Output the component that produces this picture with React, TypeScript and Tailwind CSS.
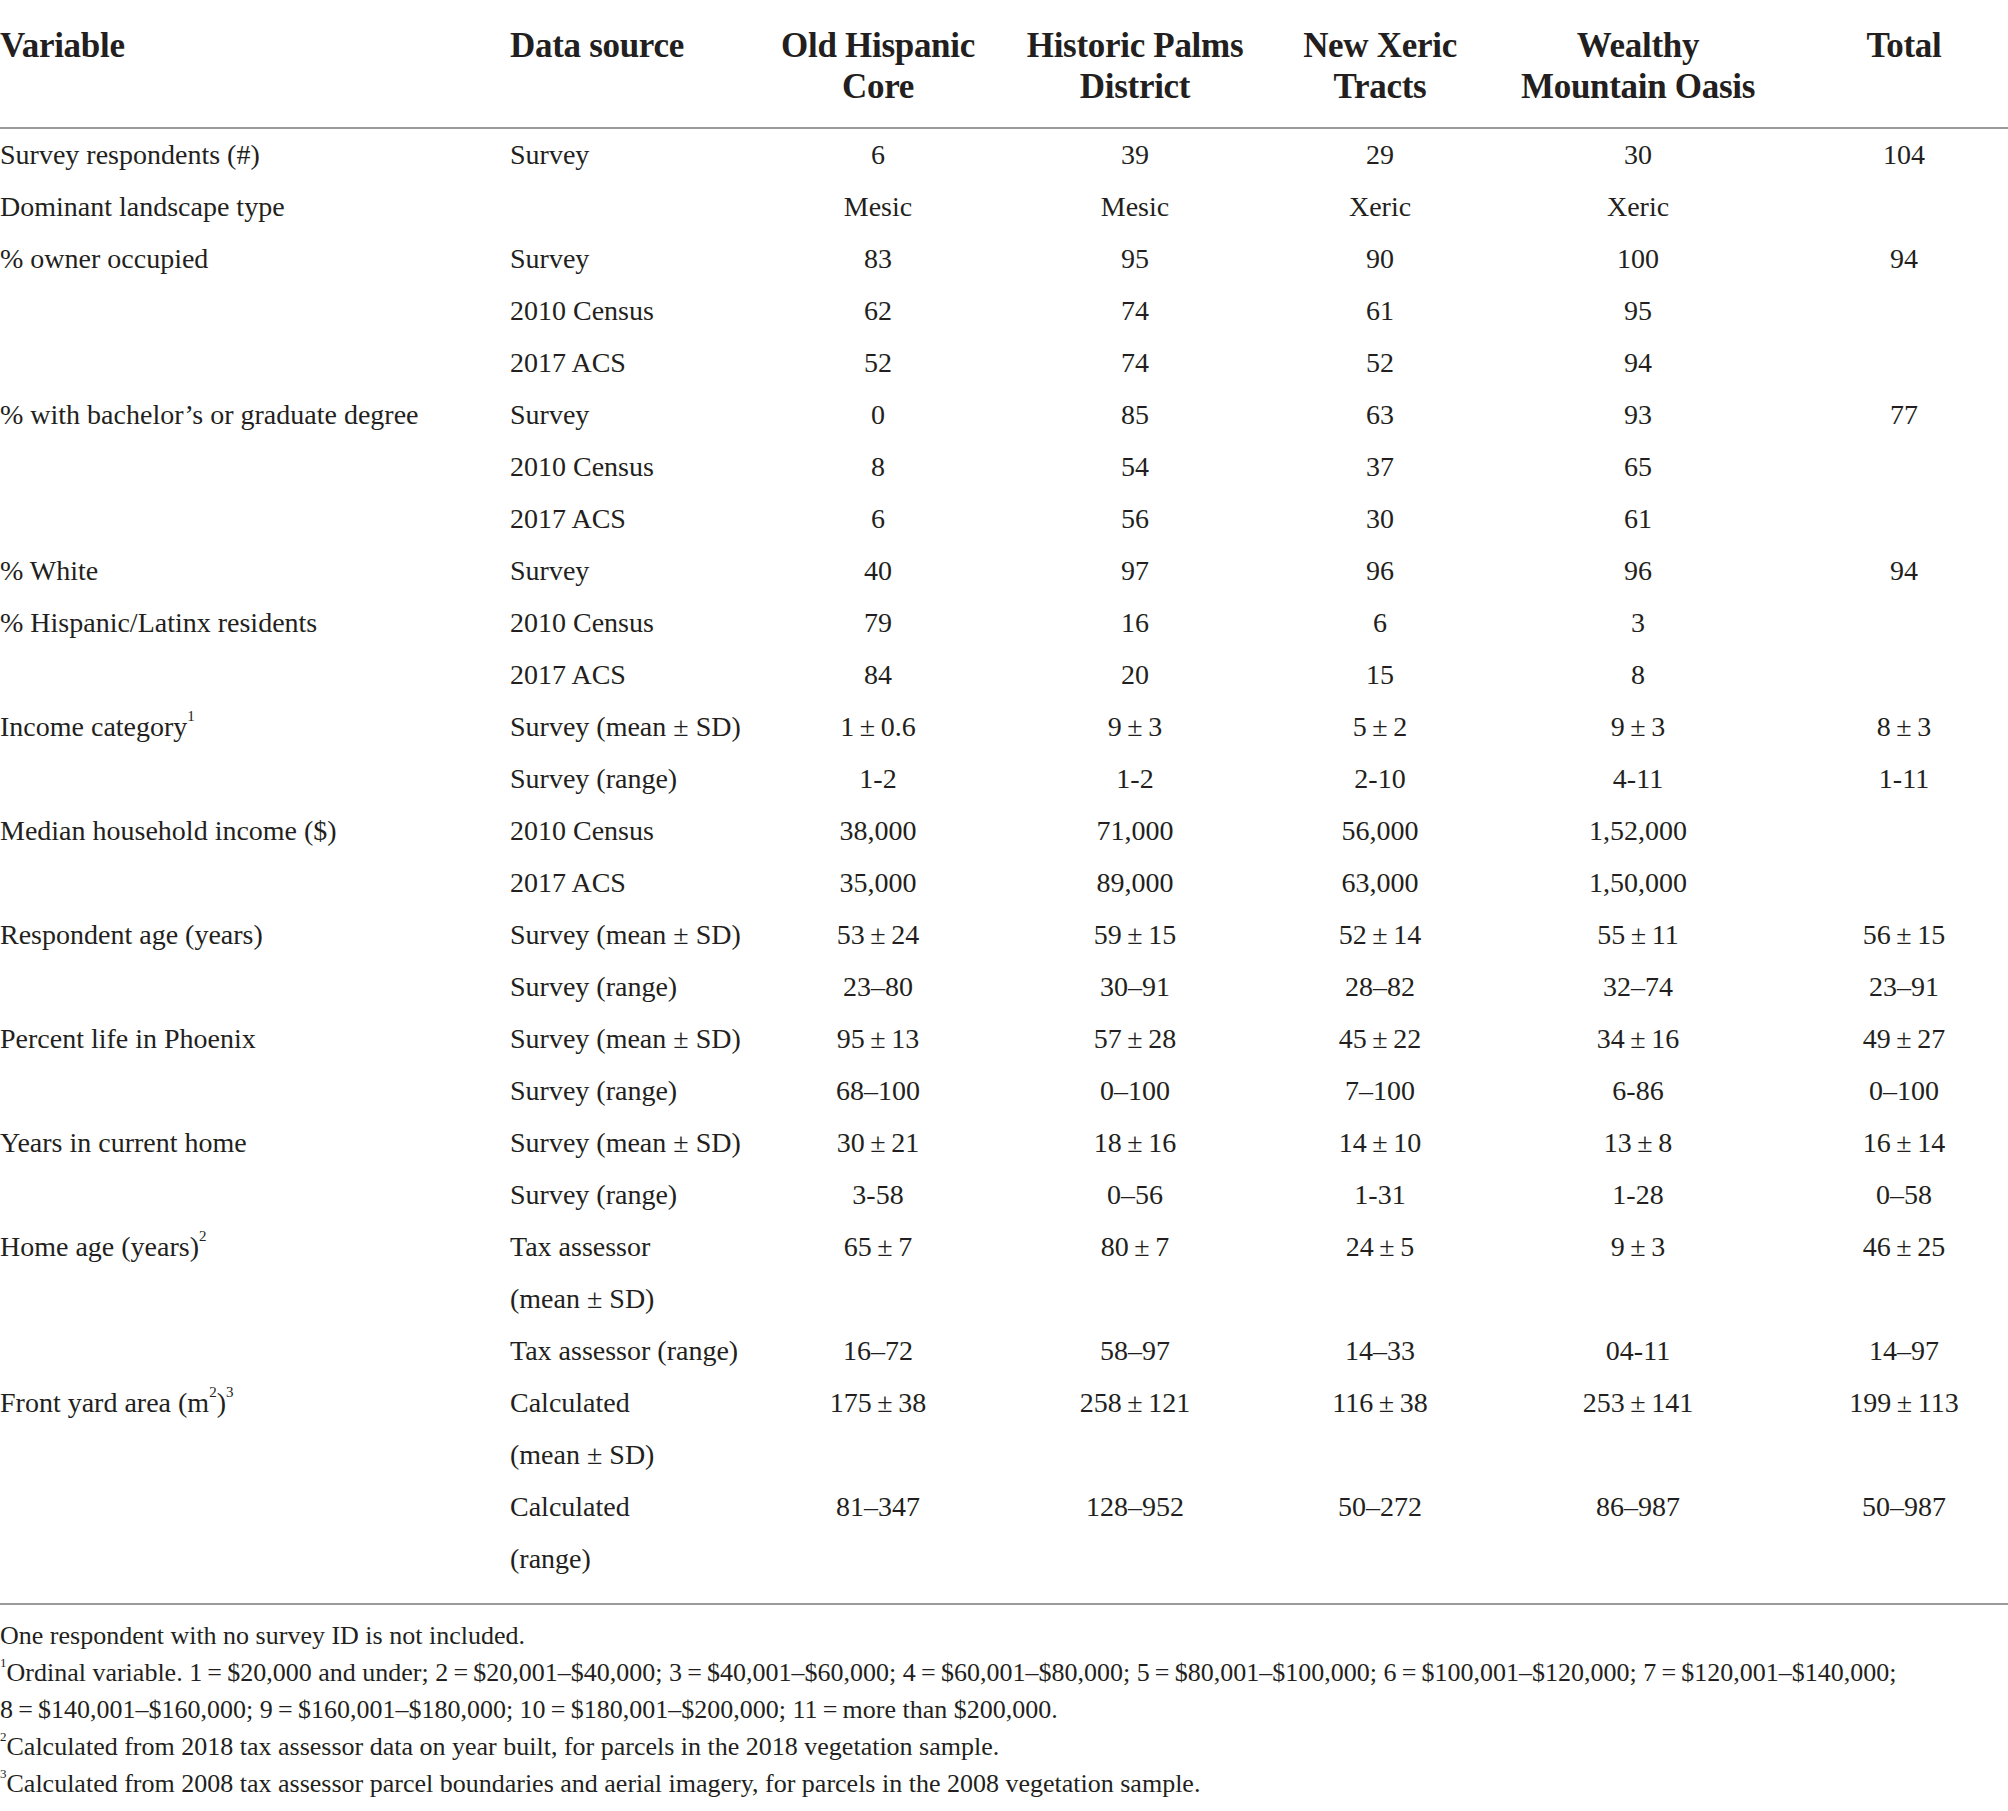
const T = '\u2009±\u2009'

type Row = {
  variable?: React.ReactNode
  source: string[]
  values: string[]
}

const Sup = ({ n }: { n: string }) => <sup className="text-[15px] align-[8px]">{n}</sup>

const rows: Row[] = [
  { variable: 'Survey respondents (#)', source: ['Survey'], values: ['6', '39', '29', '30', '104'] },
  { variable: 'Dominant landscape type', source: [''], values: ['Mesic', 'Mesic', 'Xeric', 'Xeric', ''] },
  { variable: '% owner occupied', source: ['Survey'], values: ['83', '95', '90', '100', '94'] },
  { source: ['2010 Census'], values: ['62', '74', '61', '95', ''] },
  { source: ['2017 ACS'], values: ['52', '74', '52', '94', ''] },
  { variable: '% with bachelor’s or graduate degree', source: ['Survey'], values: ['0', '85', '63', '93', '77'] },
  { source: ['2010 Census'], values: ['8', '54', '37', '65', ''] },
  { source: ['2017 ACS'], values: ['6', '56', '30', '61', ''] },
  { variable: '% White', source: ['Survey'], values: ['40', '97', '96', '96', '94'] },
  { variable: '% Hispanic/Latinx residents', source: ['2010 Census'], values: ['79', '16', '6', '3', ''] },
  { source: ['2017 ACS'], values: ['84', '20', '15', '8', ''] },
  {
    variable: <>Income category<Sup n="1" /></>,
    source: ['Survey (mean ± SD)'],
    values: [`1${T}0.6`, `9${T}3`, `5${T}2`, `9${T}3`, `8${T}3`],
  },
  { source: ['Survey (range)'], values: ['1-2', '1-2', '2-10', '4-11', '1-11'] },
  { variable: 'Median household income ($)', source: ['2010 Census'], values: ['38,000', '71,000', '56,000', '1,52,000', ''] },
  { source: ['2017 ACS'], values: ['35,000', '89,000', '63,000', '1,50,000', ''] },
  {
    variable: 'Respondent age (years)',
    source: ['Survey (mean ± SD)'],
    values: [`53${T}24`, `59${T}15`, `52${T}14`, `55${T}11`, `56${T}15`],
  },
  { source: ['Survey (range)'], values: ['23–80', '30–91', '28–82', '32–74', '23–91'] },
  {
    variable: 'Percent life in Phoenix',
    source: ['Survey (mean ± SD)'],
    values: [`95${T}13`, `57${T}28`, `45${T}22`, `34${T}16`, `49${T}27`],
  },
  { source: ['Survey (range)'], values: ['68–100', '0–100', '7–100', '6-86', '0–100'] },
  {
    variable: 'Years in current home',
    source: ['Survey (mean ± SD)'],
    values: [`30${T}21`, `18${T}16`, `14${T}10`, `13${T}8`, `16${T}14`],
  },
  { source: ['Survey (range)'], values: ['3-58', '0–56', '1-31', '1-28', '0–58'] },
  {
    variable: <>Home age (years)<Sup n="2" /></>,
    source: ['Tax assessor', '(mean ± SD)'],
    values: [`65${T}7`, `80${T}7`, `24${T}5`, `9${T}3`, `46${T}25`],
  },
  { source: ['Tax assessor (range)'], values: ['16–72', '58–97', '14–33', '04-11', '14–97'] },
  {
    variable: <>Front yard area (m<Sup n="2" />)<Sup n="3" /></>,
    source: ['Calculated', '(mean ± SD)'],
    values: [`175${T}38`, `258${T}121`, `116${T}38`, `253${T}141`, `199${T}113`],
  },
  { source: ['Calculated', '(range)'], values: ['81–347', '128–952', '50–272', '86–987', '50–987'] },
]

const headers = [
  ['Old Hispanic', 'Core'],
  ['Historic Palms', 'District'],
  ['New Xeric', 'Tracts'],
  ['Wealthy', 'Mountain Oasis'],
  ['Total'],
]

const cols = 'grid grid-cols-[510px_270px_196px_318px_172px_344px_198px]'
const eq = '\u2009=\u2009'

export default function App() {
  return (
    <div className="w-[2008px] min-h-[1811px] bg-white text-[#231f20] font-['Liberation_Serif',serif]">
      {/* Header */}
      <div className={`${cols} pt-[25px] pb-[20px] border-b-2 border-[#9a9a9a] text-[35px] font-bold leading-[41px] tracking-[-0.3px]`}>
        <div>Variable</div>
        <div>Data source</div>
        {headers.map((h, i) => (
          <div key={i} className={`text-center ${i === 4 ? 'pr-[10px]' : ''}`}>
            {h.map((line, j) => (
              <div key={j}>{line}</div>
            ))}
          </div>
        ))}
      </div>

      {/* Body */}
      <div className="pb-[18px] border-b-2 border-[#9a9a9a] text-[28px] leading-[52px]">
        {rows.map((r, i) => (
          <div key={i} className={cols}>
            <div>{r.variable}</div>
            <div>
              {r.source.map((line, j) => (
                <div key={j} className="h-[52px]">{line}</div>
              ))}
            </div>
            {r.values.map((v, j) => (
              <div key={j} className={`text-center ${j === 4 ? 'pr-[10px]' : ''}`}>{v}</div>
            ))}
          </div>
        ))}
      </div>

      {/* Footnotes */}
      <div className="pt-[12px] text-[26px] leading-[37px]">
        <div>One respondent with no survey ID is not included.</div>
        <div>
          <sup className="text-[13px] align-[8px]">1</sup>Ordinal variable. 1{eq}$20,000 and under; 2{eq}$20,001–$40,000; 3{eq}$40,001–$60,000; 4{eq}$60,001–$80,000; 5{eq}$80,001–$100,000; 6{eq}$100,001–$120,000; 7{eq}$120,001–$140,000;
        </div>
        <div>
          8{eq}$140,001–$160,000; 9{eq}$160,001–$180,000; 10{eq}$180,001–$200,000; 11{eq}more than $200,000.
        </div>
        <div>
          <sup className="text-[13px] align-[8px]">2</sup>Calculated from 2018 tax assessor data on year built, for parcels in the 2018 vegetation sample.
        </div>
        <div>
          <sup className="text-[13px] align-[8px]">3</sup>Calculated from 2008 tax assessor parcel boundaries and aerial imagery, for parcels in the 2008 vegetation sample.
        </div>
      </div>
    </div>
  )
}
